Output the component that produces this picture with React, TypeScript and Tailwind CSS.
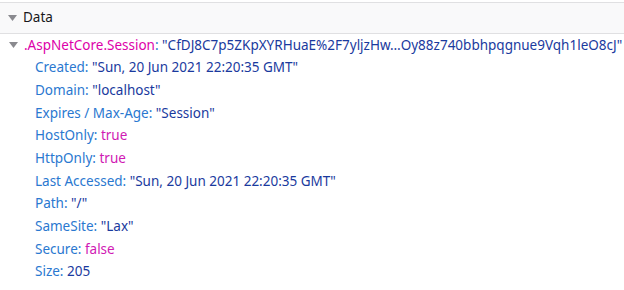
import React from "react";

const rows: { key: string; value: string; kind: "str" | "bool" | "num" }[] = [
  { key: "Created", value: '"Sun, 20 Jun 2021 22:20:35 GMT"', kind: "str" },
  { key: "Domain", value: '"localhost"', kind: "str" },
  { key: "Expires / Max-Age", value: '"Session"', kind: "str" },
  { key: "HostOnly", value: "true", kind: "bool" },
  { key: "HttpOnly", value: "true", kind: "bool" },
  { key: "Last Accessed", value: '"Sun, 20 Jun 2021 22:20:35 GMT"', kind: "str" },
  { key: "Path", value: '"/"', kind: "str" },
  { key: "SameSite", value: '"Lax"', kind: "str" },
  { key: "Secure", value: "false", kind: "bool" },
  { key: "Size", value: "205", kind: "num" },
];

function Twisty() {
  return (
    <svg width="9" height="6" viewBox="0 0 9 6" className="shrink-0">
      <path d="M0 0 H9 L4.5 6 Z" fill="#8a8a8f" />
    </svg>
  );
}

export default function App() {
  return (
    <div
      className="w-[624px] h-[290px] bg-white overflow-hidden text-[13.5px] leading-none"
      style={{ fontFamily: '"Noto Sans", "Open Sans", sans-serif' }}
    >
      <div className="mt-[2px] h-[32px] flex items-center gap-[6px] pl-[8px] bg-[#f9f9fa] border-y border-[#e0e0e2] text-[#18181a]">
        <Twisty />
        <span>Data</span>
      </div>

      <div className="h-[22.7px] flex items-center gap-[6px] pl-[9px] whitespace-nowrap">
        <Twisty />
        <span>
          <span className="text-[#dd00a9]">.AspNetCore.Session</span>
          <span className="text-[#2a78d0]">: </span>
          <span className="text-[#1a3a9e]">
            "CfDJ8C7p5ZKpXYRHuaE%2F7yljzHw…Oy88z740bbhpqgnue9Vqh1leO8cJ"
          </span>
        </span>
      </div>

      {rows.map((r) => (
        <div key={r.key} className="h-[22.7px] flex items-center pl-[35px] whitespace-pre">
          <span className="text-[#2a78d0]">{r.key}: </span>
          <span className={r.kind === "bool" ? "text-[#d01ab4]" : "text-[#1a3a9e]"}>
            {r.value}
          </span>
        </div>
      ))}
    </div>
  );
}
